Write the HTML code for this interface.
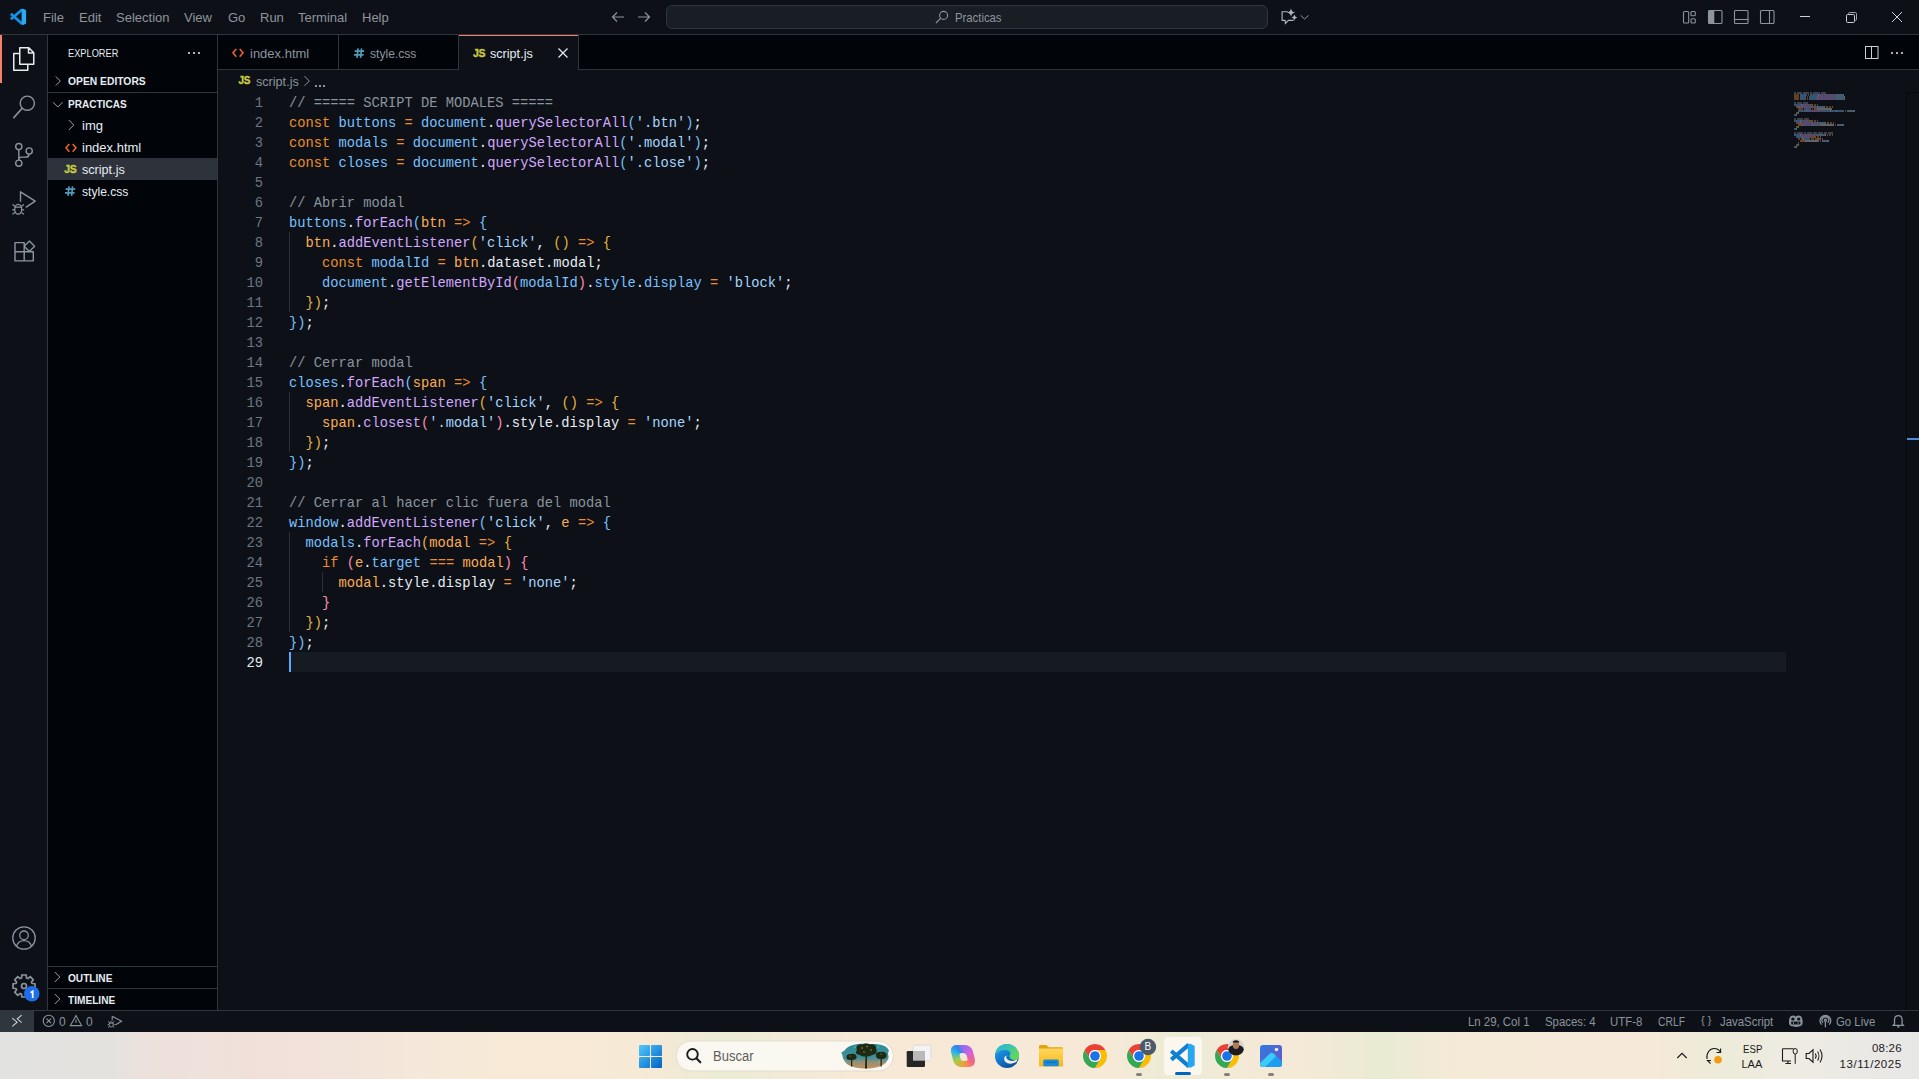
<!DOCTYPE html>
<html><head><meta charset="utf-8">
<style>
*{box-sizing:border-box;margin:0;padding:0}
html,body{width:1919px;height:1079px;overflow:hidden;background:#0d1117;font-family:"Liberation Sans",sans-serif}
.abs{position:absolute}
.t{position:absolute;white-space:pre;line-height:1}
.cl{position:absolute;left:289px;height:20px;line-height:20px;font-family:"Liberation Mono",monospace;font-size:13.75px;white-space:pre;color:#e6edf3}
.ln{position:absolute;left:224px;width:39px;text-align:right;height:20px;line-height:20px;font-family:"Liberation Mono",monospace;font-size:13.75px;white-space:pre}
svg{position:absolute;overflow:visible}
</style></head><body>

<!-- TITLE BAR -->
<div class="abs" style="left:0;top:0;width:1919px;height:34px;background:#0d1117"></div>
<div class="abs" style="left:0;top:34px;width:1919px;height:1px;background:#30363d"></div>
<!-- vscode logo -->
<svg style="left:0;top:0" width="34" height="34" viewBox="0 0 34 34">
  <path d="M10.8 19.3L22.3 9.4 M10.8 13.7L22.3 23.9" stroke="#1592e6" stroke-width="2.7"/>
  <path d="M21.6 9.2L23.3 8.8L26.1 10.3V23.4L23.3 24.9L21.6 24.5Z" fill="#2aa9f3"/>
</svg>
<div class="t" style="left:43px;top:11px;font-size:13px;color:#8d949c">File</div>
<div class="t" style="left:79px;top:11px;font-size:13px;color:#8d949c">Edit</div>
<div class="t" style="left:116px;top:11px;font-size:13px;color:#8d949c">Selection</div>
<div class="t" style="left:184px;top:11px;font-size:13px;color:#8d949c">View</div>
<div class="t" style="left:228px;top:11px;font-size:13px;color:#8d949c">Go</div>
<div class="t" style="left:260px;top:11px;font-size:13px;color:#8d949c">Run</div>
<div class="t" style="left:298px;top:11px;font-size:13px;color:#8d949c">Terminal</div>
<div class="t" style="left:362px;top:11px;font-size:13px;color:#8d949c">Help</div>

<!-- nav arrows -->
<svg style="left:610px;top:9px" width="16" height="16" viewBox="0 0 16 16"><path d="M14 8H2.5M7 3.5L2.5 8L7 12.5" fill="none" stroke="#8d949c" stroke-width="1.2"/></svg>
<svg style="left:636px;top:9px" width="16" height="16" viewBox="0 0 16 16"><path d="M2 8H13.5M9 3.5L13.5 8L9 12.5" fill="none" stroke="#8d949c" stroke-width="1.2"/></svg>
<!-- command center -->
<div class="abs" style="left:666px;top:5px;width:602px;height:24px;border:1px solid #30363d;border-radius:6px;background:#191d24"></div>
<svg style="left:935px;top:10px" width="14" height="14" viewBox="0 0 14 14"><circle cx="8.6" cy="5.4" r="4" fill="none" stroke="#8d949c" stroke-width="1.1"/><path d="M5.8 8.2L1 13" stroke="#8d949c" stroke-width="1.2"/></svg>
<div class="t" style="left:954.5px;top:11px;font-size:13px;color:#8d949c;transform-origin:0 0;transform:scaleX(0.87)">Practicas</div>
<!-- copilot -->
<svg style="left:0;top:0" width="1919" height="34" viewBox="0 0 1919 34">
 <path d="M1287.8 11.7H1282.1V20.3H1285.1L1285.4 23.4L1288.4 20.3H1293.6" fill="none" stroke="#aeb5bc" stroke-width="1.15"/>
 <path d="M1291 8.3Q1291.5 12 1295.2 12.5Q1291.5 13 1291 16.7Q1290.5 13 1286.8 12.5Q1290.5 12 1291 8.3Z" fill="#aeb5bc"/>
 <path d="M1294.4 14.6Q1294.8 17.1 1297.3 17.5Q1294.8 17.9 1294.4 20.4Q1294 17.9 1291.5 17.5Q1294 17.1 1294.4 14.6Z" fill="#aeb5bc"/>
 <path d="M1300.6 15.4L1304.6 19L1308.6 15.4" fill="none" stroke="#8d949c" stroke-width="1"/>
</svg>
<!-- layout icons -->
<svg style="left:1683px;top:10px" width="16" height="16" viewBox="0 0 16 16"><rect x="0.5" y="1.5" width="5.2" height="11.5" rx="1" fill="none" stroke="#8d949c" stroke-width="1.1"/><rect x="8" y="1.5" width="4.3" height="4.3" rx="1" fill="none" stroke="#8d949c" stroke-width="1.1"/><rect x="8" y="8.7" width="4.3" height="4.3" rx="1" fill="none" stroke="#8d949c" stroke-width="1.1"/></svg>
<svg style="left:1708px;top:10px" width="16" height="16" viewBox="0 0 16 16"><rect x="0.5" y="0.5" width="13.5" height="13" rx="1" fill="none" stroke="#8d949c" stroke-width="1.1"/><rect x="0.5" y="0.5" width="5.8" height="13" fill="#8d949c"/></svg>
<svg style="left:1734px;top:10px" width="16" height="16" viewBox="0 0 16 16"><rect x="0.5" y="0.5" width="13.5" height="13" rx="1" fill="none" stroke="#8d949c" stroke-width="1.1"/><path d="M0.5 9.5H14.5" stroke="#8d949c" stroke-width="1.1"/></svg>
<svg style="left:1760px;top:10px" width="16" height="16" viewBox="0 0 16 16"><rect x="0.5" y="0.5" width="13.5" height="13" rx="1" fill="none" stroke="#8d949c" stroke-width="1.1"/><path d="M9.5 0.5V14" stroke="#8d949c" stroke-width="1.1"/></svg>
<!-- window controls -->
<div class="abs" style="left:1800px;top:16px;width:10px;height:1px;background:#c9d1d9"></div>
<svg style="left:1846px;top:11.5px" width="12" height="12" viewBox="0 0 12 12"><rect x="0.5" y="2.5" width="8" height="8" rx="1.2" fill="none" stroke="#c9d1d9" stroke-width="1"/><path d="M2.5 2.5V1.8A1.3 1.3 0 0 1 3.8 0.5H9.2A1.3 1.3 0 0 1 10.5 1.8V7.2A1.3 1.3 0 0 1 9.2 8.5H8.5" fill="none" stroke="#9aa2ab" stroke-width="1"/></svg>
<svg style="left:1891px;top:11px" width="12" height="12" viewBox="0 0 12 12"><path d="M1 1L11 11M11 1L1 11" stroke="#c9d1d9" stroke-width="1"/></svg>

<!-- ACTIVITY BAR -->
<div class="abs" style="left:0;top:35px;width:47px;height:975px;background:#0d1117"></div>
<div class="abs" style="left:47px;top:35px;width:1px;height:975px;background:#30363d"></div>
<div class="abs" style="left:0;top:35px;width:2px;height:48px;background:#f78166"></div>


<!-- activity icons -->
<svg style="left:0;top:0" width="48" height="1010" viewBox="0 0 48 1010">
 <g fill="none" stroke-linejoin="round">
  <path d="M19.75 47.75H28.8L33.75 52.7V64.25H19.75Z M28.5 47.75V53H33.75 M19.75 53.5H13.75V70.25H27.75V64.25" stroke="#e6edf3" stroke-width="1.5"/>
  <circle cx="27.3" cy="103.2" r="7.1" stroke="#8b949e" stroke-width="1.4"/>
  <path d="M22.2 108.3L13.8 117.6" stroke="#8b949e" stroke-width="1.6" stroke-linecap="round"/>
  <circle cx="18.8" cy="146.6" r="3.1" stroke="#8b949e" stroke-width="1.4"/>
  <circle cx="18.8" cy="163.2" r="3.1" stroke="#8b949e" stroke-width="1.4"/>
  <circle cx="29.2" cy="151" r="3.1" stroke="#8b949e" stroke-width="1.4"/>
  <path d="M18.8 149.7V160.1 M18.8 159.5C18.8 157.9 19.9 157.1 21.5 157.1H25.6C27.6 157.1 29 156 29.1 154.1" stroke="#8b949e" stroke-width="1.4"/>
  <path d="M20.5 201.8V191.8L35.2 201.2L25.8 207.3" stroke="#8b949e" stroke-width="1.4"/>
  <ellipse cx="18.2" cy="209.3" rx="3.5" ry="4.9" stroke="#8b949e" stroke-width="1.3"/>
  <path d="M14.8 207.2H21.6 M12.5 204.5L15 206.3 M23.9 204.5L21.4 206.3 M12.2 209.9H14.6 M21.8 209.9H24.2 M12.5 214.2L15 212.5 M23.9 214.2L21.4 212.5" stroke="#8b949e" stroke-width="1.2"/>
  <path d="M15 242.6H24.2V260.9H15Z M15 251.75H33.3V260.9H24.2 M29.4 241.1L34.6 246.35L29.4 251.6L24.2 246.35Z" stroke="#8b949e" stroke-width="1.4"/>
  <circle cx="24" cy="938" r="11.2" stroke="#8b949e" stroke-width="1.3"/>
  <circle cx="24" cy="935.3" r="4.3" stroke="#8b949e" stroke-width="1.3"/>
  <path d="M16.4 946.2C17.6 942.6 20.5 940.6 24 940.6C27.5 940.6 30.4 942.6 31.6 946.2" stroke="#8b949e" stroke-width="1.3"/>
  <path id="gear" d="M32.02 983.52 L34.98 983.77 L34.98 988.23 L32.02 988.48 L31.43 989.92 L33.34 992.19 L30.19 995.34 L27.92 993.43 L26.48 994.02 L26.23 996.98 L21.77 996.98 L21.52 994.02 L20.08 993.43 L17.81 995.34 L14.66 992.19 L16.57 989.92 L15.98 988.48 L13.02 988.23 L13.02 983.77 L15.98 983.52 L16.57 982.08 L14.66 979.81 L17.81 976.66 L20.08 978.57 L21.52 977.98 L21.77 975.02 L26.23 975.02 L26.48 977.98 L27.92 978.57 L30.19 976.66 L33.34 979.81 L31.43 982.08Z" stroke="#8b949e" stroke-width="1.7"/>
  <circle cx="24" cy="986" r="2.5" stroke="#8b949e" stroke-width="1.7"/>
 </g>
 <circle cx="31.8" cy="993.7" r="7.7" fill="#1f6feb"/>
 <path d="M30.6 992.7L32.7 991.3V998.1" fill="none" stroke="#fff" stroke-width="1.7"/>
</svg>

<!-- SIDEBAR -->
<div class="abs" style="left:48px;top:35px;width:169px;height:975px;background:#010409"></div>
<div class="abs" style="left:217px;top:35px;width:1px;height:975px;background:#30363d"></div>


<!-- sidebar content -->
<div class="t" style="left:68px;top:47.5px;font-size:11px;color:#e6edf3;transform-origin:0 0;transform:scaleX(0.84)">EXPLORER</div>
<div class="abs" style="left:188px;top:52px;width:2px;height:2px;background:#aeb5bd"></div>
<div class="abs" style="left:193px;top:52px;width:2px;height:2px;background:#aeb5bd"></div>
<div class="abs" style="left:198px;top:52px;width:2px;height:2px;background:#aeb5bd"></div>
<svg style="left:54px;top:75px" width="10" height="12" viewBox="0 0 10 12"><path d="M1.8 1.5L6.3 6L1.8 10.5" fill="none" stroke="#9aa2ab" stroke-width="1"/></svg>
<div class="t" style="left:68px;top:76.3px;font-size:11px;font-weight:700;color:#e6edf3;transform-origin:0 0;transform:scaleX(0.937)">OPEN EDITORS</div>
<div class="abs" style="left:48px;top:92px;width:169px;height:1px;background:#30363d"></div>
<svg style="left:52px;top:100px" width="12" height="10" viewBox="0 0 12 10"><path d="M1 2.2L5.8 7L10.6 2.2" fill="none" stroke="#9aa2ab" stroke-width="1"/></svg>
<div class="t" style="left:68px;top:99.3px;font-size:11px;font-weight:700;color:#e6edf3;transform-origin:0 0;transform:scaleX(0.913)">PRACTICAS</div>
<svg style="left:67px;top:119px" width="10" height="12" viewBox="0 0 10 12"><path d="M1.8 1L6.8 6L1.8 11" fill="none" stroke="#9aa2ab" stroke-width="1"/></svg>
<div class="t" style="left:82px;top:119px;font-size:13px;color:#e6edf3">img</div>
<div class="abs" style="left:48px;top:158px;width:169px;height:22px;background:#2d323b"></div>
<div class="t" style="left:82px;top:141px;font-size:13px;color:#e6edf3">index.html</div>
<div class="t" style="left:82px;top:163px;font-size:13px;color:#e6edf3;transform-origin:0 0;transform:scaleX(0.97)">script.js</div>
<div class="t" style="left:82px;top:185px;font-size:13px;color:#e6edf3;transform-origin:0 0;transform:scaleX(0.93)">style.css</div>
<svg style="left:64.5px;top:142.5px" width="13" height="11" viewBox="0 0 13 11"><path d="M4.3 0.9L1 4.8L4.3 8.7M7.7 0.9L11 4.8L7.7 8.7" fill="none" stroke="#e8622c" stroke-width="1.6"/></svg>
<div class="t" style="left:64.3px;top:163.8px;font-size:10.5px;font-weight:700;color:#cbcb41;letter-spacing:-0.4px;-webkit-text-stroke:0.35px #cbcb41">JS</div>
<svg style="left:65px;top:186px" width="12" height="12" viewBox="0 0 12 12"><path d="M4 0.3L3 9.8M7.6 0.3L6.6 9.8M0.6 3.2H10.2M0 6.8H9.6" fill="none" stroke="#519aba" stroke-width="1.7"/></svg>
<svg style="left:53px;top:971px" width="10" height="12" viewBox="0 0 10 12"><path d="M1.8 1L6.8 6L1.8 11" fill="none" stroke="#9aa2ab" stroke-width="1"/></svg>
<div class="abs" style="left:48px;top:966px;width:169px;height:1px;background:#30363d"></div>
<div class="t" style="left:68px;top:973px;font-size:11px;font-weight:700;color:#e6edf3;transform-origin:0 0;transform:scaleX(0.92)">OUTLINE</div>
<div class="abs" style="left:48px;top:988px;width:169px;height:1px;background:#30363d"></div>
<svg style="left:53px;top:993px" width="10" height="12" viewBox="0 0 10 12"><path d="M1.8 1L6.8 6L1.8 11" fill="none" stroke="#9aa2ab" stroke-width="1"/></svg>
<div class="t" style="left:68px;top:995px;font-size:11px;font-weight:700;color:#e6edf3;transform-origin:0 0;transform:scaleX(0.92)">TIMELINE</div>

<!-- TABS -->
<div class="abs" style="left:218px;top:70px;width:1701px;height:940px;background:#0d1117"></div>

<div class="abs" style="left:218px;top:35px;width:1701px;height:35px;background:#010409"></div>
<div class="abs" style="left:218px;top:69px;width:1701px;height:1px;background:#30363d"></div>
<div class="abs" style="left:459px;top:35px;width:119px;height:35px;background:#0d1117"></div>
<div class="abs" style="left:459px;top:35px;width:119px;height:1px;background:#f78166"></div>
<div class="abs" style="left:338px;top:35px;width:1px;height:35px;background:#30363d"></div>
<div class="abs" style="left:458px;top:35px;width:1px;height:35px;background:#30363d"></div>
<div class="abs" style="left:578px;top:35px;width:1px;height:35px;background:#30363d"></div>


<!-- tab content -->
<svg style="left:232.2px;top:48px" width="13" height="11" viewBox="0 0 13 11"><path d="M4.3 0.9L1 4.8L4.3 8.7M7.7 0.9L11 4.8L7.7 8.7" fill="none" stroke="#e8622c" stroke-width="1.6"/></svg>
<div class="t" style="left:250px;top:47px;font-size:13px;color:#8b949e">index.html</div>
<svg style="left:354px;top:47.8px" width="12" height="12" viewBox="0 0 12 12"><path d="M4 0.3L3 9.8M7.6 0.3L6.6 9.8M0.6 3.2H10.2M0 6.8H9.6" fill="none" stroke="#519aba" stroke-width="1.7"/></svg>
<div class="t" style="left:370px;top:47px;font-size:13px;color:#8b949e;transform-origin:0 0;transform:scaleX(0.93)">style.css</div>
<div class="t" style="left:473px;top:47.5px;font-size:10.5px;font-weight:700;color:#cbcb41;letter-spacing:-0.4px;-webkit-text-stroke:0.35px #cbcb41">JS</div>
<div class="t" style="left:490px;top:47px;font-size:13px;color:#e6edf3;transform-origin:0 0;transform:scaleX(0.97)">script.js</div>
<svg style="left:557px;top:47px" width="12" height="12" viewBox="0 0 12 12"><path d="M1.5 1.5L10.5 10.5M10.5 1.5L1.5 10.5" stroke="#e6edf3" stroke-width="1.2"/></svg>
<svg style="left:1864px;top:45px" width="16" height="16" viewBox="0 0 16 16"><rect x="1.5" y="1.5" width="12.5" height="12" fill="none" stroke="#c9d1d9" stroke-width="1"/><path d="M7.5 1.5V13.5" stroke="#c9d1d9" stroke-width="1"/></svg>
<div class="abs" style="left:1891px;top:52px;width:2px;height:2px;background:#a7afb8"></div>
<div class="abs" style="left:1896px;top:52px;width:2px;height:2px;background:#a7afb8"></div>
<div class="abs" style="left:1901px;top:52px;width:2px;height:2px;background:#a7afb8"></div>
<!-- breadcrumb -->
<div class="t" style="left:238.5px;top:76.3px;font-size:10px;font-weight:700;color:#cbcb41;letter-spacing:-0.4px;-webkit-text-stroke:0.35px #cbcb41">JS</div>
<div class="t" style="left:256px;top:75px;font-size:13px;color:#8b949e;transform-origin:0 0;transform:scaleX(0.97)">script.js</div>
<svg style="left:302px;top:75px" width="10" height="12" viewBox="0 0 10 12"><path d="M2.5 1.2L7.3 6L2.5 10.8" fill="none" stroke="#8b949e" stroke-width="1"/></svg>
<div class="abs" style="left:315px;top:85px;width:1.5px;height:1.5px;background:#8b949e"></div>
<div class="abs" style="left:319px;top:85px;width:1.5px;height:1.5px;background:#8b949e"></div>
<div class="abs" style="left:323px;top:85px;width:1.5px;height:1.5px;background:#8b949e"></div>

<!-- EDITOR -->
<div class="abs" style="left:290px;top:652px;width:1496px;height:20px;background:#161b22"></div>
<div style="position:absolute;left:289px;top:232px;width:1px;height:80px;background:#2b3037"></div>
<div style="position:absolute;left:289px;top:392px;width:1px;height:60px;background:#2b3037"></div>
<div style="position:absolute;left:289px;top:532px;width:1px;height:100px;background:#2b3037"></div>
<div style="position:absolute;left:322px;top:572px;width:1px;height:20px;background:#2b3037"></div>
<div class="cl" style="top:94px"><span style="color:#8b949e">// ===== SCRIPT DE MODALES =====</span></div>
<div class="ln" style="top:94px;color:#6e7681">1</div>
<div class="cl" style="top:114px"><span style="color:#ec8e2c">const</span><span style="color:#e6edf3"> </span><span style="color:#79c0ff">buttons</span><span style="color:#e6edf3"> </span><span style="color:#ec8e2c">=</span><span style="color:#e6edf3"> </span><span style="color:#79c0ff">document</span><span style="color:#e6edf3">.</span><span style="color:#d2a8ff">querySelectorAll</span><span style="color:#79c0ff">(</span><span style="color:#a5d6ff">&#x27;.btn&#x27;</span><span style="color:#79c0ff">)</span><span style="color:#e6edf3">;</span></div>
<div class="ln" style="top:114px;color:#6e7681">2</div>
<div class="cl" style="top:134px"><span style="color:#ec8e2c">const</span><span style="color:#e6edf3"> </span><span style="color:#79c0ff">modals</span><span style="color:#e6edf3"> </span><span style="color:#ec8e2c">=</span><span style="color:#e6edf3"> </span><span style="color:#79c0ff">document</span><span style="color:#e6edf3">.</span><span style="color:#d2a8ff">querySelectorAll</span><span style="color:#79c0ff">(</span><span style="color:#a5d6ff">&#x27;.modal&#x27;</span><span style="color:#79c0ff">)</span><span style="color:#e6edf3">;</span></div>
<div class="ln" style="top:134px;color:#6e7681">3</div>
<div class="cl" style="top:154px"><span style="color:#ec8e2c">const</span><span style="color:#e6edf3"> </span><span style="color:#79c0ff">closes</span><span style="color:#e6edf3"> </span><span style="color:#ec8e2c">=</span><span style="color:#e6edf3"> </span><span style="color:#79c0ff">document</span><span style="color:#e6edf3">.</span><span style="color:#d2a8ff">querySelectorAll</span><span style="color:#79c0ff">(</span><span style="color:#a5d6ff">&#x27;.close&#x27;</span><span style="color:#79c0ff">)</span><span style="color:#e6edf3">;</span></div>
<div class="ln" style="top:154px;color:#6e7681">4</div>
<div class="cl" style="top:174px"></div>
<div class="ln" style="top:174px;color:#6e7681">5</div>
<div class="cl" style="top:194px"><span style="color:#8b949e">// Abrir modal</span></div>
<div class="ln" style="top:194px;color:#6e7681">6</div>
<div class="cl" style="top:214px"><span style="color:#79c0ff">buttons</span><span style="color:#e6edf3">.</span><span style="color:#d2a8ff">forEach</span><span style="color:#79c0ff">(</span><span style="color:#fdac54">btn</span><span style="color:#e6edf3"> </span><span style="color:#ec8e2c">=&gt;</span><span style="color:#e6edf3"> </span><span style="color:#79c0ff">{</span></div>
<div class="ln" style="top:214px;color:#6e7681">7</div>
<div class="cl" style="top:234px"><span style="color:#e6edf3">  </span><span style="color:#fdac54">btn</span><span style="color:#e6edf3">.</span><span style="color:#d2a8ff">addEventListener</span><span style="color:#e3b341">(</span><span style="color:#a5d6ff">&#x27;click&#x27;</span><span style="color:#e6edf3">, </span><span style="color:#e3b341">()</span><span style="color:#e6edf3"> </span><span style="color:#ec8e2c">=&gt;</span><span style="color:#e6edf3"> </span><span style="color:#e3b341">{</span></div>
<div class="ln" style="top:234px;color:#6e7681">8</div>
<div class="cl" style="top:254px"><span style="color:#e6edf3">    </span><span style="color:#ec8e2c">const</span><span style="color:#e6edf3"> </span><span style="color:#79c0ff">modalId</span><span style="color:#e6edf3"> </span><span style="color:#ec8e2c">=</span><span style="color:#e6edf3"> </span><span style="color:#fdac54">btn</span><span style="color:#e6edf3">.dataset.modal;</span></div>
<div class="ln" style="top:254px;color:#6e7681">9</div>
<div class="cl" style="top:274px"><span style="color:#e6edf3">    </span><span style="color:#79c0ff">document</span><span style="color:#e6edf3">.</span><span style="color:#d2a8ff">getElementById</span><span style="color:#ff8eb2">(</span><span style="color:#79c0ff">modalId</span><span style="color:#ff8eb2">)</span><span style="color:#e6edf3">.</span><span style="color:#79c0ff">style</span><span style="color:#e6edf3">.</span><span style="color:#79c0ff">display</span><span style="color:#e6edf3"> </span><span style="color:#ec8e2c">=</span><span style="color:#e6edf3"> </span><span style="color:#a5d6ff">&#x27;block&#x27;</span><span style="color:#e6edf3">;</span></div>
<div class="ln" style="top:274px;color:#6e7681">10</div>
<div class="cl" style="top:294px"><span style="color:#e6edf3">  </span><span style="color:#e3b341">})</span><span style="color:#e6edf3">;</span></div>
<div class="ln" style="top:294px;color:#6e7681">11</div>
<div class="cl" style="top:314px"><span style="color:#79c0ff">})</span><span style="color:#e6edf3">;</span></div>
<div class="ln" style="top:314px;color:#6e7681">12</div>
<div class="cl" style="top:334px"></div>
<div class="ln" style="top:334px;color:#6e7681">13</div>
<div class="cl" style="top:354px"><span style="color:#8b949e">// Cerrar modal</span></div>
<div class="ln" style="top:354px;color:#6e7681">14</div>
<div class="cl" style="top:374px"><span style="color:#79c0ff">closes</span><span style="color:#e6edf3">.</span><span style="color:#d2a8ff">forEach</span><span style="color:#79c0ff">(</span><span style="color:#fdac54">span</span><span style="color:#e6edf3"> </span><span style="color:#ec8e2c">=&gt;</span><span style="color:#e6edf3"> </span><span style="color:#79c0ff">{</span></div>
<div class="ln" style="top:374px;color:#6e7681">15</div>
<div class="cl" style="top:394px"><span style="color:#e6edf3">  </span><span style="color:#fdac54">span</span><span style="color:#e6edf3">.</span><span style="color:#d2a8ff">addEventListener</span><span style="color:#e3b341">(</span><span style="color:#a5d6ff">&#x27;click&#x27;</span><span style="color:#e6edf3">, </span><span style="color:#e3b341">()</span><span style="color:#e6edf3"> </span><span style="color:#ec8e2c">=&gt;</span><span style="color:#e6edf3"> </span><span style="color:#e3b341">{</span></div>
<div class="ln" style="top:394px;color:#6e7681">16</div>
<div class="cl" style="top:414px"><span style="color:#e6edf3">    </span><span style="color:#fdac54">span</span><span style="color:#e6edf3">.</span><span style="color:#d2a8ff">closest</span><span style="color:#ff8eb2">(</span><span style="color:#a5d6ff">&#x27;.modal&#x27;</span><span style="color:#ff8eb2">)</span><span style="color:#e6edf3">.style.display </span><span style="color:#ec8e2c">=</span><span style="color:#e6edf3"> </span><span style="color:#a5d6ff">&#x27;none&#x27;</span><span style="color:#e6edf3">;</span></div>
<div class="ln" style="top:414px;color:#6e7681">17</div>
<div class="cl" style="top:434px"><span style="color:#e6edf3">  </span><span style="color:#e3b341">})</span><span style="color:#e6edf3">;</span></div>
<div class="ln" style="top:434px;color:#6e7681">18</div>
<div class="cl" style="top:454px"><span style="color:#79c0ff">})</span><span style="color:#e6edf3">;</span></div>
<div class="ln" style="top:454px;color:#6e7681">19</div>
<div class="cl" style="top:474px"></div>
<div class="ln" style="top:474px;color:#6e7681">20</div>
<div class="cl" style="top:494px"><span style="color:#8b949e">// Cerrar al hacer clic fuera del modal</span></div>
<div class="ln" style="top:494px;color:#6e7681">21</div>
<div class="cl" style="top:514px"><span style="color:#79c0ff">window</span><span style="color:#e6edf3">.</span><span style="color:#d2a8ff">addEventListener</span><span style="color:#79c0ff">(</span><span style="color:#a5d6ff">&#x27;click&#x27;</span><span style="color:#e6edf3">, </span><span style="color:#fdac54">e</span><span style="color:#e6edf3"> </span><span style="color:#ec8e2c">=&gt;</span><span style="color:#e6edf3"> </span><span style="color:#79c0ff">{</span></div>
<div class="ln" style="top:514px;color:#6e7681">22</div>
<div class="cl" style="top:534px"><span style="color:#e6edf3">  </span><span style="color:#79c0ff">modals</span><span style="color:#e6edf3">.</span><span style="color:#d2a8ff">forEach</span><span style="color:#e3b341">(</span><span style="color:#fdac54">modal</span><span style="color:#e6edf3"> </span><span style="color:#ec8e2c">=&gt;</span><span style="color:#e6edf3"> </span><span style="color:#e3b341">{</span></div>
<div class="ln" style="top:534px;color:#6e7681">23</div>
<div class="cl" style="top:554px"><span style="color:#e6edf3">    </span><span style="color:#ec8e2c">if</span><span style="color:#e6edf3"> </span><span style="color:#ff8eb2">(</span><span style="color:#fdac54">e</span><span style="color:#e6edf3">.</span><span style="color:#79c0ff">target</span><span style="color:#e6edf3"> </span><span style="color:#ec8e2c">===</span><span style="color:#e6edf3"> </span><span style="color:#fdac54">modal</span><span style="color:#ff8eb2">)</span><span style="color:#e6edf3"> </span><span style="color:#ff8eb2">{</span></div>
<div class="ln" style="top:554px;color:#6e7681">24</div>
<div class="cl" style="top:574px"><span style="color:#e6edf3">      </span><span style="color:#fdac54">modal</span><span style="color:#e6edf3">.style.display </span><span style="color:#ec8e2c">=</span><span style="color:#e6edf3"> </span><span style="color:#a5d6ff">&#x27;none&#x27;</span><span style="color:#e6edf3">;</span></div>
<div class="ln" style="top:574px;color:#6e7681">25</div>
<div class="cl" style="top:594px"><span style="color:#e6edf3">    </span><span style="color:#ff8eb2">}</span></div>
<div class="ln" style="top:594px;color:#6e7681">26</div>
<div class="cl" style="top:614px"><span style="color:#e6edf3">  </span><span style="color:#e3b341">})</span><span style="color:#e6edf3">;</span></div>
<div class="ln" style="top:614px;color:#6e7681">27</div>
<div class="cl" style="top:634px"><span style="color:#79c0ff">})</span><span style="color:#e6edf3">;</span></div>
<div class="ln" style="top:634px;color:#6e7681">28</div>
<div class="cl" style="top:654px"></div>
<div class="ln" style="top:654px;color:#e6edf3">29</div>
<div class="abs" style="left:289px;top:652px;width:2px;height:20px;background:#5aa8ff"></div>
<div style="position:absolute;left:1794px;top:92px;width:2px;height:2px;background:#8b949e;opacity:.38"></div>
<div style="position:absolute;left:1797px;top:92px;width:5px;height:2px;background:#8b949e;opacity:.38"></div>
<div style="position:absolute;left:1803px;top:92px;width:6px;height:2px;background:#8b949e;opacity:.38"></div>
<div style="position:absolute;left:1810px;top:92px;width:2px;height:2px;background:#8b949e;opacity:.38"></div>
<div style="position:absolute;left:1813px;top:92px;width:7px;height:2px;background:#8b949e;opacity:.38"></div>
<div style="position:absolute;left:1821px;top:92px;width:5px;height:2px;background:#8b949e;opacity:.38"></div>
<div style="position:absolute;left:1794px;top:94px;width:5px;height:2px;background:#ec8e2c;opacity:.38"></div>
<div style="position:absolute;left:1800px;top:94px;width:7px;height:2px;background:#79c0ff;opacity:.38"></div>
<div style="position:absolute;left:1808px;top:94px;width:1px;height:2px;background:#ec8e2c;opacity:.38"></div>
<div style="position:absolute;left:1810px;top:94px;width:8px;height:2px;background:#79c0ff;opacity:.38"></div>
<div style="position:absolute;left:1818px;top:94px;width:1px;height:2px;background:#e6edf3;opacity:.38"></div>
<div style="position:absolute;left:1819px;top:94px;width:16px;height:2px;background:#d2a8ff;opacity:.38"></div>
<div style="position:absolute;left:1835px;top:94px;width:1px;height:2px;background:#79c0ff;opacity:.38"></div>
<div style="position:absolute;left:1836px;top:94px;width:6px;height:2px;background:#a5d6ff;opacity:.38"></div>
<div style="position:absolute;left:1842px;top:94px;width:1px;height:2px;background:#79c0ff;opacity:.38"></div>
<div style="position:absolute;left:1843px;top:94px;width:1px;height:2px;background:#e6edf3;opacity:.38"></div>
<div style="position:absolute;left:1794px;top:96px;width:5px;height:2px;background:#ec8e2c;opacity:.38"></div>
<div style="position:absolute;left:1800px;top:96px;width:6px;height:2px;background:#79c0ff;opacity:.38"></div>
<div style="position:absolute;left:1807px;top:96px;width:1px;height:2px;background:#ec8e2c;opacity:.38"></div>
<div style="position:absolute;left:1809px;top:96px;width:8px;height:2px;background:#79c0ff;opacity:.38"></div>
<div style="position:absolute;left:1817px;top:96px;width:1px;height:2px;background:#e6edf3;opacity:.38"></div>
<div style="position:absolute;left:1818px;top:96px;width:16px;height:2px;background:#d2a8ff;opacity:.38"></div>
<div style="position:absolute;left:1834px;top:96px;width:1px;height:2px;background:#79c0ff;opacity:.38"></div>
<div style="position:absolute;left:1835px;top:96px;width:8px;height:2px;background:#a5d6ff;opacity:.38"></div>
<div style="position:absolute;left:1843px;top:96px;width:1px;height:2px;background:#79c0ff;opacity:.38"></div>
<div style="position:absolute;left:1844px;top:96px;width:1px;height:2px;background:#e6edf3;opacity:.38"></div>
<div style="position:absolute;left:1794px;top:98px;width:5px;height:2px;background:#ec8e2c;opacity:.38"></div>
<div style="position:absolute;left:1800px;top:98px;width:6px;height:2px;background:#79c0ff;opacity:.38"></div>
<div style="position:absolute;left:1807px;top:98px;width:1px;height:2px;background:#ec8e2c;opacity:.38"></div>
<div style="position:absolute;left:1809px;top:98px;width:8px;height:2px;background:#79c0ff;opacity:.38"></div>
<div style="position:absolute;left:1817px;top:98px;width:1px;height:2px;background:#e6edf3;opacity:.38"></div>
<div style="position:absolute;left:1818px;top:98px;width:16px;height:2px;background:#d2a8ff;opacity:.38"></div>
<div style="position:absolute;left:1834px;top:98px;width:1px;height:2px;background:#79c0ff;opacity:.38"></div>
<div style="position:absolute;left:1835px;top:98px;width:8px;height:2px;background:#a5d6ff;opacity:.38"></div>
<div style="position:absolute;left:1843px;top:98px;width:1px;height:2px;background:#79c0ff;opacity:.38"></div>
<div style="position:absolute;left:1844px;top:98px;width:1px;height:2px;background:#e6edf3;opacity:.38"></div>
<div style="position:absolute;left:1794px;top:102px;width:2px;height:2px;background:#8b949e;opacity:.38"></div>
<div style="position:absolute;left:1797px;top:102px;width:5px;height:2px;background:#8b949e;opacity:.38"></div>
<div style="position:absolute;left:1803px;top:102px;width:5px;height:2px;background:#8b949e;opacity:.38"></div>
<div style="position:absolute;left:1794px;top:104px;width:7px;height:2px;background:#79c0ff;opacity:.38"></div>
<div style="position:absolute;left:1801px;top:104px;width:1px;height:2px;background:#e6edf3;opacity:.38"></div>
<div style="position:absolute;left:1802px;top:104px;width:7px;height:2px;background:#d2a8ff;opacity:.38"></div>
<div style="position:absolute;left:1809px;top:104px;width:1px;height:2px;background:#79c0ff;opacity:.38"></div>
<div style="position:absolute;left:1810px;top:104px;width:3px;height:2px;background:#fdac54;opacity:.38"></div>
<div style="position:absolute;left:1814px;top:104px;width:2px;height:2px;background:#ec8e2c;opacity:.38"></div>
<div style="position:absolute;left:1817px;top:104px;width:1px;height:2px;background:#79c0ff;opacity:.38"></div>
<div style="position:absolute;left:1796px;top:106px;width:3px;height:2px;background:#fdac54;opacity:.38"></div>
<div style="position:absolute;left:1799px;top:106px;width:1px;height:2px;background:#e6edf3;opacity:.38"></div>
<div style="position:absolute;left:1800px;top:106px;width:16px;height:2px;background:#d2a8ff;opacity:.38"></div>
<div style="position:absolute;left:1816px;top:106px;width:1px;height:2px;background:#e3b341;opacity:.38"></div>
<div style="position:absolute;left:1817px;top:106px;width:7px;height:2px;background:#a5d6ff;opacity:.38"></div>
<div style="position:absolute;left:1824px;top:106px;width:1px;height:2px;background:#e6edf3;opacity:.38"></div>
<div style="position:absolute;left:1826px;top:106px;width:2px;height:2px;background:#e3b341;opacity:.38"></div>
<div style="position:absolute;left:1829px;top:106px;width:2px;height:2px;background:#ec8e2c;opacity:.38"></div>
<div style="position:absolute;left:1832px;top:106px;width:1px;height:2px;background:#e3b341;opacity:.38"></div>
<div style="position:absolute;left:1798px;top:108px;width:5px;height:2px;background:#ec8e2c;opacity:.38"></div>
<div style="position:absolute;left:1804px;top:108px;width:7px;height:2px;background:#79c0ff;opacity:.38"></div>
<div style="position:absolute;left:1812px;top:108px;width:1px;height:2px;background:#ec8e2c;opacity:.38"></div>
<div style="position:absolute;left:1814px;top:108px;width:3px;height:2px;background:#fdac54;opacity:.38"></div>
<div style="position:absolute;left:1817px;top:108px;width:15px;height:2px;background:#e6edf3;opacity:.38"></div>
<div style="position:absolute;left:1798px;top:110px;width:8px;height:2px;background:#79c0ff;opacity:.38"></div>
<div style="position:absolute;left:1806px;top:110px;width:1px;height:2px;background:#e6edf3;opacity:.38"></div>
<div style="position:absolute;left:1807px;top:110px;width:14px;height:2px;background:#d2a8ff;opacity:.38"></div>
<div style="position:absolute;left:1821px;top:110px;width:1px;height:2px;background:#ff8eb2;opacity:.38"></div>
<div style="position:absolute;left:1822px;top:110px;width:7px;height:2px;background:#79c0ff;opacity:.38"></div>
<div style="position:absolute;left:1829px;top:110px;width:1px;height:2px;background:#ff8eb2;opacity:.38"></div>
<div style="position:absolute;left:1830px;top:110px;width:1px;height:2px;background:#e6edf3;opacity:.38"></div>
<div style="position:absolute;left:1831px;top:110px;width:5px;height:2px;background:#79c0ff;opacity:.38"></div>
<div style="position:absolute;left:1836px;top:110px;width:1px;height:2px;background:#e6edf3;opacity:.38"></div>
<div style="position:absolute;left:1837px;top:110px;width:7px;height:2px;background:#79c0ff;opacity:.38"></div>
<div style="position:absolute;left:1845px;top:110px;width:1px;height:2px;background:#ec8e2c;opacity:.38"></div>
<div style="position:absolute;left:1847px;top:110px;width:7px;height:2px;background:#a5d6ff;opacity:.38"></div>
<div style="position:absolute;left:1854px;top:110px;width:1px;height:2px;background:#e6edf3;opacity:.38"></div>
<div style="position:absolute;left:1796px;top:112px;width:2px;height:2px;background:#e3b341;opacity:.38"></div>
<div style="position:absolute;left:1798px;top:112px;width:1px;height:2px;background:#e6edf3;opacity:.38"></div>
<div style="position:absolute;left:1794px;top:114px;width:2px;height:2px;background:#79c0ff;opacity:.38"></div>
<div style="position:absolute;left:1796px;top:114px;width:1px;height:2px;background:#e6edf3;opacity:.38"></div>
<div style="position:absolute;left:1794px;top:118px;width:2px;height:2px;background:#8b949e;opacity:.38"></div>
<div style="position:absolute;left:1797px;top:118px;width:6px;height:2px;background:#8b949e;opacity:.38"></div>
<div style="position:absolute;left:1804px;top:118px;width:5px;height:2px;background:#8b949e;opacity:.38"></div>
<div style="position:absolute;left:1794px;top:120px;width:6px;height:2px;background:#79c0ff;opacity:.38"></div>
<div style="position:absolute;left:1800px;top:120px;width:1px;height:2px;background:#e6edf3;opacity:.38"></div>
<div style="position:absolute;left:1801px;top:120px;width:7px;height:2px;background:#d2a8ff;opacity:.38"></div>
<div style="position:absolute;left:1808px;top:120px;width:1px;height:2px;background:#79c0ff;opacity:.38"></div>
<div style="position:absolute;left:1809px;top:120px;width:4px;height:2px;background:#fdac54;opacity:.38"></div>
<div style="position:absolute;left:1814px;top:120px;width:2px;height:2px;background:#ec8e2c;opacity:.38"></div>
<div style="position:absolute;left:1817px;top:120px;width:1px;height:2px;background:#79c0ff;opacity:.38"></div>
<div style="position:absolute;left:1796px;top:122px;width:4px;height:2px;background:#fdac54;opacity:.38"></div>
<div style="position:absolute;left:1800px;top:122px;width:1px;height:2px;background:#e6edf3;opacity:.38"></div>
<div style="position:absolute;left:1801px;top:122px;width:16px;height:2px;background:#d2a8ff;opacity:.38"></div>
<div style="position:absolute;left:1817px;top:122px;width:1px;height:2px;background:#e3b341;opacity:.38"></div>
<div style="position:absolute;left:1818px;top:122px;width:7px;height:2px;background:#a5d6ff;opacity:.38"></div>
<div style="position:absolute;left:1825px;top:122px;width:1px;height:2px;background:#e6edf3;opacity:.38"></div>
<div style="position:absolute;left:1827px;top:122px;width:2px;height:2px;background:#e3b341;opacity:.38"></div>
<div style="position:absolute;left:1830px;top:122px;width:2px;height:2px;background:#ec8e2c;opacity:.38"></div>
<div style="position:absolute;left:1833px;top:122px;width:1px;height:2px;background:#e3b341;opacity:.38"></div>
<div style="position:absolute;left:1798px;top:124px;width:4px;height:2px;background:#fdac54;opacity:.38"></div>
<div style="position:absolute;left:1802px;top:124px;width:1px;height:2px;background:#e6edf3;opacity:.38"></div>
<div style="position:absolute;left:1803px;top:124px;width:7px;height:2px;background:#d2a8ff;opacity:.38"></div>
<div style="position:absolute;left:1810px;top:124px;width:1px;height:2px;background:#ff8eb2;opacity:.38"></div>
<div style="position:absolute;left:1811px;top:124px;width:8px;height:2px;background:#a5d6ff;opacity:.38"></div>
<div style="position:absolute;left:1819px;top:124px;width:1px;height:2px;background:#ff8eb2;opacity:.38"></div>
<div style="position:absolute;left:1820px;top:124px;width:14px;height:2px;background:#e6edf3;opacity:.38"></div>
<div style="position:absolute;left:1835px;top:124px;width:1px;height:2px;background:#ec8e2c;opacity:.38"></div>
<div style="position:absolute;left:1837px;top:124px;width:6px;height:2px;background:#a5d6ff;opacity:.38"></div>
<div style="position:absolute;left:1843px;top:124px;width:1px;height:2px;background:#e6edf3;opacity:.38"></div>
<div style="position:absolute;left:1796px;top:126px;width:2px;height:2px;background:#e3b341;opacity:.38"></div>
<div style="position:absolute;left:1798px;top:126px;width:1px;height:2px;background:#e6edf3;opacity:.38"></div>
<div style="position:absolute;left:1794px;top:128px;width:2px;height:2px;background:#79c0ff;opacity:.38"></div>
<div style="position:absolute;left:1796px;top:128px;width:1px;height:2px;background:#e6edf3;opacity:.38"></div>
<div style="position:absolute;left:1794px;top:132px;width:2px;height:2px;background:#8b949e;opacity:.38"></div>
<div style="position:absolute;left:1797px;top:132px;width:6px;height:2px;background:#8b949e;opacity:.38"></div>
<div style="position:absolute;left:1804px;top:132px;width:2px;height:2px;background:#8b949e;opacity:.38"></div>
<div style="position:absolute;left:1807px;top:132px;width:5px;height:2px;background:#8b949e;opacity:.38"></div>
<div style="position:absolute;left:1813px;top:132px;width:4px;height:2px;background:#8b949e;opacity:.38"></div>
<div style="position:absolute;left:1818px;top:132px;width:5px;height:2px;background:#8b949e;opacity:.38"></div>
<div style="position:absolute;left:1824px;top:132px;width:3px;height:2px;background:#8b949e;opacity:.38"></div>
<div style="position:absolute;left:1828px;top:132px;width:5px;height:2px;background:#8b949e;opacity:.38"></div>
<div style="position:absolute;left:1794px;top:134px;width:6px;height:2px;background:#79c0ff;opacity:.38"></div>
<div style="position:absolute;left:1800px;top:134px;width:1px;height:2px;background:#e6edf3;opacity:.38"></div>
<div style="position:absolute;left:1801px;top:134px;width:16px;height:2px;background:#d2a8ff;opacity:.38"></div>
<div style="position:absolute;left:1817px;top:134px;width:1px;height:2px;background:#79c0ff;opacity:.38"></div>
<div style="position:absolute;left:1818px;top:134px;width:7px;height:2px;background:#a5d6ff;opacity:.38"></div>
<div style="position:absolute;left:1825px;top:134px;width:1px;height:2px;background:#e6edf3;opacity:.38"></div>
<div style="position:absolute;left:1827px;top:134px;width:1px;height:2px;background:#fdac54;opacity:.38"></div>
<div style="position:absolute;left:1829px;top:134px;width:2px;height:2px;background:#ec8e2c;opacity:.38"></div>
<div style="position:absolute;left:1832px;top:134px;width:1px;height:2px;background:#79c0ff;opacity:.38"></div>
<div style="position:absolute;left:1796px;top:136px;width:6px;height:2px;background:#79c0ff;opacity:.38"></div>
<div style="position:absolute;left:1802px;top:136px;width:1px;height:2px;background:#e6edf3;opacity:.38"></div>
<div style="position:absolute;left:1803px;top:136px;width:7px;height:2px;background:#d2a8ff;opacity:.38"></div>
<div style="position:absolute;left:1810px;top:136px;width:1px;height:2px;background:#e3b341;opacity:.38"></div>
<div style="position:absolute;left:1811px;top:136px;width:5px;height:2px;background:#fdac54;opacity:.38"></div>
<div style="position:absolute;left:1817px;top:136px;width:2px;height:2px;background:#ec8e2c;opacity:.38"></div>
<div style="position:absolute;left:1820px;top:136px;width:1px;height:2px;background:#e3b341;opacity:.38"></div>
<div style="position:absolute;left:1798px;top:138px;width:2px;height:2px;background:#ec8e2c;opacity:.38"></div>
<div style="position:absolute;left:1801px;top:138px;width:1px;height:2px;background:#ff8eb2;opacity:.38"></div>
<div style="position:absolute;left:1802px;top:138px;width:1px;height:2px;background:#fdac54;opacity:.38"></div>
<div style="position:absolute;left:1803px;top:138px;width:1px;height:2px;background:#e6edf3;opacity:.38"></div>
<div style="position:absolute;left:1804px;top:138px;width:6px;height:2px;background:#79c0ff;opacity:.38"></div>
<div style="position:absolute;left:1811px;top:138px;width:3px;height:2px;background:#ec8e2c;opacity:.38"></div>
<div style="position:absolute;left:1815px;top:138px;width:5px;height:2px;background:#fdac54;opacity:.38"></div>
<div style="position:absolute;left:1820px;top:138px;width:1px;height:2px;background:#ff8eb2;opacity:.38"></div>
<div style="position:absolute;left:1822px;top:138px;width:1px;height:2px;background:#ff8eb2;opacity:.38"></div>
<div style="position:absolute;left:1800px;top:140px;width:5px;height:2px;background:#fdac54;opacity:.38"></div>
<div style="position:absolute;left:1805px;top:140px;width:14px;height:2px;background:#e6edf3;opacity:.38"></div>
<div style="position:absolute;left:1820px;top:140px;width:1px;height:2px;background:#ec8e2c;opacity:.38"></div>
<div style="position:absolute;left:1822px;top:140px;width:6px;height:2px;background:#a5d6ff;opacity:.38"></div>
<div style="position:absolute;left:1828px;top:140px;width:1px;height:2px;background:#e6edf3;opacity:.38"></div>
<div style="position:absolute;left:1798px;top:142px;width:1px;height:2px;background:#ff8eb2;opacity:.38"></div>
<div style="position:absolute;left:1796px;top:144px;width:2px;height:2px;background:#e3b341;opacity:.38"></div>
<div style="position:absolute;left:1798px;top:144px;width:1px;height:2px;background:#e6edf3;opacity:.38"></div>
<div style="position:absolute;left:1794px;top:146px;width:2px;height:2px;background:#79c0ff;opacity:.38"></div>
<div style="position:absolute;left:1796px;top:146px;width:1px;height:2px;background:#e6edf3;opacity:.38"></div>
<div class="abs" style="left:1906px;top:92px;width:1px;height:918px;background:#05080d"></div><div class="abs" style="left:1906px;top:92px;width:13px;height:1px;background:#05080d"></div>
<div class="abs" style="left:1907px;top:438px;width:12px;height:2px;background:#4a8cd6"></div>

<!-- STATUS BAR -->
<div class="abs" style="left:0;top:1010px;width:1919px;height:1px;background:#30363d"></div>
<div class="abs" style="left:0;top:1011px;width:1919px;height:21px;background:#0d1117"></div>
<div class="abs" style="left:0;top:1011px;width:34px;height:21px;background:#30363d"></div>


<!-- status content -->
<svg style="left:0;top:1010px" width="130" height="22" viewBox="0 1010 130 22">
 <g fill="none" stroke="#c9d1d9" stroke-width="1.1">
  <path d="M12.3 1018.2L17.1 1022.2L12.3 1026.3 M21.7 1015.1L17.3 1018.8L21.7 1022.6"/>
 </g>
 <g fill="none" stroke="#8b949e" stroke-width="1.1">
  <circle cx="48.8" cy="1020.9" r="5.6"/>
  <path d="M46.5 1018.6L51.1 1023.2M51.1 1018.6L46.5 1023.2"/>
  <path d="M76 1015.6L81.6 1025.6H70.4Z M76 1019.5V1023"/>
  <path d="M112.2 1016.2L121.6 1021.2L115.2 1025 M112.2 1016.2V1020.2"/>
  <ellipse cx="111.2" cy="1024.4" rx="2.1" ry="2.7" stroke-width="1"/>
  <path d="M109.1 1023.2H113.3 M108 1021.4L109.3 1022.2 M114.4 1021.4L113.1 1022.2 M107.7 1024.5H109 M113.4 1024.5H114.7 M108 1027.4L109.3 1026.6 M114.4 1027.4L113.1 1026.6" stroke-width="0.9"/>
 </g>
</svg>
<div class="t" style="left:59px;top:1016px;font-size:12px;color:#8b949e">0</div>
<div class="t" style="left:86px;top:1016px;font-size:12px;color:#8b949e">0</div>
<div class="t" style="left:1468px;top:1016px;font-size:12px;color:#8b949e;transform-origin:0 0;transform:scaleX(0.95)">Ln 29, Col 1</div>
<div class="t" style="left:1545px;top:1016px;font-size:12px;color:#8b949e;transform-origin:0 0;transform:scaleX(0.95)">Spaces: 4</div>
<div class="t" style="left:1610px;top:1016px;font-size:12px;color:#8b949e;transform-origin:0 0;transform:scaleX(0.95)">UTF-8</div>
<div class="t" style="left:1658px;top:1016px;font-size:12px;color:#8b949e;transform-origin:0 0;transform:scaleX(0.86)">CRLF</div>
<div class="t" style="left:1701px;top:1015px;font-size:11px;color:#8b949e">{ }</div>
<div class="t" style="left:1720px;top:1016px;font-size:12px;color:#8b949e;transform-origin:0 0;transform:scaleX(0.95)">JavaScript</div>
<svg style="left:1780px;top:1010px" width="140" height="22" viewBox="1780 1010 140 22">
 <g fill="none" stroke="#8b949e" stroke-width="1.3">
  <path d="M1789 1021.5C1789 1017.2 1790.8 1015.5 1793.3 1015.5C1794.9 1015.5 1795.8 1016.3 1795.8 1017.6C1795.8 1016.3 1796.7 1015.5 1798.3 1015.5C1800.8 1015.5 1802.6 1017.2 1802.6 1021.5V1023C1802.6 1025.6 1799.5 1026.9 1795.8 1026.9C1792.1 1026.9 1789 1025.6 1789 1023Z" fill="#8b949e" stroke="none"/>
  <ellipse cx="1792.9" cy="1018.9" rx="1.7" ry="1.5" fill="#0d1117" stroke="none"/>
  <ellipse cx="1798.7" cy="1018.9" rx="1.7" ry="1.5" fill="#0d1117" stroke="none"/>
  <path d="M1791.2 1021.6H1800.4V1024.4H1791.2Z" fill="#0d1117" stroke="none"/>
  <path d="M1793.5 1022.2V1023.8M1798.1 1022.2V1023.8" stroke="#8b949e" stroke-width="1.1"/>
  <circle cx="1825.4" cy="1020.3" r="1.1"/>
  <path d="M1823 1022.8A3.5 3.5 0 1 1 1827.8 1022.8 M1821.6 1024.6A5.4 5.4 0 1 1 1829.2 1024.6 M1825.4 1021.8V1027.3"/>
  <path d="M1894.5 1024V1020C1894.5 1017.3 1896 1015.6 1898.3 1015.6C1900.6 1015.6 1902.1 1017.3 1902.1 1020V1024L1903.3 1025.3H1893.3Z M1897 1026.8H1899.6"/>
 </g>
</svg>
<div class="t" style="left:1836px;top:1016px;font-size:12px;color:#8b949e;transform-origin:0 0;transform:scaleX(0.95)">Go Live</div>

<!-- TASKBAR -->
<div class="abs" style="left:0;top:1032px;width:1919px;height:47px;background:linear-gradient(90deg,#e2e2e0 0.00%,#e3e2df 5.73%,#ece1dc 7.30%,#f1e0da 13.03%,#f2e3db 17.72%,#f6e8d9 22.41%,#f8ead6 27.10%,#f6e9d6 33.35%,#ecebd4 37.52%,#f0ead6 40.65%,#f7e9d6 44.82%,#f7e9d7 57.32%,#ebecd5 61.49%,#f4e9d7 65.14%,#f5e9d7 67.74%,#e9ebd3 71.91%,#f5e9d8 76.08%,#f6e9d9 85.98%,#edebd9 89.63%,#eeebe3 93.80%,#e9e8e5 97.97%,#e7e7e6 100.00%)"></div>


<!-- taskbar content -->
<svg style="left:0;top:1032px" width="1919" height="47" viewBox="0 1032 1919 47">
 <defs>
  <linearGradient id="win" gradientUnits="userSpaceOnUse" x1="639" y1="1045" x2="662" y2="1068"><stop offset="0" stop-color="#52c8fd"/><stop offset="1" stop-color="#0062c4"/></linearGradient>
  <linearGradient id="blob" x1="0" y1="0" x2="0" y2="1"><stop offset="0" stop-color="#2a8c95"/><stop offset="0.55" stop-color="#3f8f9a"/><stop offset="1" stop-color="#c99a6a"/></linearGradient>
  <linearGradient id="edge" x1="0" y1="0" x2="0.6" y2="1"><stop offset="0" stop-color="#2aa6ec"/><stop offset="0.6" stop-color="#1178cf"/><stop offset="1" stop-color="#0b4f9a"/></linearGradient>
  <linearGradient id="edge2" x1="0" y1="0" x2="1" y2="0.5"><stop offset="0" stop-color="#2cb2e4"/><stop offset="0.6" stop-color="#3cc6a8"/><stop offset="1" stop-color="#62d85a"/></linearGradient>
  <linearGradient id="fold" x1="0" y1="0" x2="0" y2="1"><stop offset="0" stop-color="#ffd75e"/><stop offset="1" stop-color="#f7b818"/></linearGradient>
  <linearGradient id="photo" x1="0" y1="0" x2="1" y2="1"><stop offset="0" stop-color="#2b7de0"/><stop offset="1" stop-color="#7452c4"/></linearGradient>
  <linearGradient id="cop" x1="0" y1="0" x2="1" y2="1"><stop offset="0" stop-color="#27a3f2"/><stop offset="0.35" stop-color="#4fcf7a"/><stop offset="0.55" stop-color="#f9b23a"/><stop offset="0.8" stop-color="#f25b8f"/><stop offset="1" stop-color="#b86cf2"/></linearGradient>
  <linearGradient id="vsc" x1="0" y1="0" x2="1" y2="0"><stop offset="0" stop-color="#0a78d1"/><stop offset="1" stop-color="#2aaaf0"/></linearGradient>
 </defs>
 <!-- windows -->
 <rect x="639" y="1045" width="11" height="11" rx="1" fill="url(#win)"/>
 <rect x="651" y="1045" width="11" height="11" rx="1" fill="url(#win)"/>
 <rect x="639" y="1057" width="11" height="11" rx="1" fill="url(#win)"/>
 <rect x="651" y="1057" width="11" height="11" rx="1" fill="url(#win)"/>
 <!-- search box -->
 <rect x="676" y="1041" width="217.5" height="30" rx="15" fill="#fbf8f1" stroke="#e2dccd" stroke-width="1"/>
 <circle cx="692.5" cy="1054.3" r="5.3" fill="none" stroke="#1c1c1c" stroke-width="1.9"/>
 <path d="M696.4 1058.3L700.3 1062.3" stroke="#1c1c1c" stroke-width="2.1" stroke-linecap="round"/>
 <path d="M845 1050C848 1044.5 860 1043 870 1044C880 1043.5 888 1046 889 1051C887 1053 889 1056 888.5 1058C887 1063 880 1068.5 866 1068.5C852 1068.5 845 1064 844 1060C842 1057 843 1054 841 1053C842 1052 844 1051 845 1050Z" fill="url(#blob)"/>
 <path d="M846 1063C852 1061 860 1060.5 866 1060.5C874 1060.5 882 1061 887 1062C884 1066 876 1068.5 866 1068.5C856 1068.5 849 1066 846 1063Z" fill="#b88a58" opacity="0.45"/>
 <g fill="#1f2a12">
  <path d="M857 1050C855 1046 859 1043.5 862 1044.5C864 1043 868 1043 870 1044.5C873 1043.5 877 1045.5 876 1049C878 1051 876 1055 872 1055C869 1057 862 1057 860 1055C856 1055 855 1052 857 1050Z"/>
  <path d="M865.5 1055H867V1068.5H865Z"/>
  <path d="M846.5 1057C846 1054.5 849 1053.5 851 1054C853.5 1053 857 1054.5 856.5 1057C857 1059 854 1060.5 851 1060C848 1060.5 846 1059 846.5 1057Z"/>
  <path d="M851 1059.5H852.3V1066.5H851Z"/>
  <path d="M876 1055C875.5 1052.5 878 1051.5 880.5 1052C883 1051 887 1052.5 886.5 1055C887 1058 884 1059.5 881 1059C878 1059.5 875.5 1057.5 876 1055Z"/>
  <path d="M880.5 1058.5H881.8V1066.5H880.5Z"/>
 </g>
 <g fill="#b9b84a" opacity="0.8"><circle cx="862" cy="1048" r="0.8"/><circle cx="867" cy="1046.5" r="0.8"/><circle cx="871" cy="1050" r="0.8"/><circle cx="864" cy="1052" r="0.7"/><circle cx="850" cy="1056" r="0.6"/><circle cx="881" cy="1054" r="0.6"/></g>
 <g fill="#dfeff0" opacity="0.8"><circle cx="855" cy="1047" r="0.6"/><circle cx="878" cy="1047" r="0.6"/><circle cx="846" cy="1062" r="0.5"/><circle cx="879" cy="1062" r="0.5"/></g>
 <!-- task view -->
 <rect x="913" y="1045.2" width="17.8" height="15.5" rx="1.2" fill="#f4f4f4" stroke="#d8d8d8" stroke-width="0.8"/>
 <rect x="906.7" y="1051" width="18.3" height="16" rx="1.2" fill="#262626"/>
 <rect x="913" y="1051" width="12" height="9.7" fill="#b9b9b9"/>
 <!-- copilot -->
 <!-- edge -->
 <circle cx="1007" cy="1056" r="12" fill="url(#edge)"/>
 <path d="M995.2 1054.5C996 1047.5 1001 1044 1007 1044C1014 1044 1019 1049.5 1019 1055.5C1019 1058.5 1017.5 1060 1015 1060C1012 1060 1009.5 1058.5 1009.5 1056.5C1009.5 1054.5 1011 1053.5 1010 1052C1008 1049 1000 1049 995.2 1054.5Z" fill="url(#edge2)"/>
 <path d="M1017.6 1058.8C1015.5 1061.2 1011.2 1061.6 1008.3 1060C1006.2 1058.9 1005.6 1056.8 1006.8 1055.4C1004.4 1055.8 1003.5 1058.6 1004.8 1061C1006.8 1064.2 1012.4 1064.6 1016.6 1061.6Z" fill="#f2efe0"/>
 <!-- folder -->
 <path d="M1039 1046.5C1039 1045.7 1039.7 1045 1040.5 1045H1046.5L1048.5 1047.3H1061.5C1062.4 1047.3 1063 1048 1063 1048.8V1066.2H1039Z" fill="#e3a20c"/>
 <rect x="1039" y="1048.5" width="24" height="17.7" rx="0.8" fill="url(#fold)"/>
 <rect x="1043.2" y="1059.5" width="15.6" height="6.7" rx="1.5" fill="#1a8ad6"/>
 <path d="M1045.5 1062.3H1056.5" stroke="#0f62a8" stroke-width="0.8"/>
 <!-- chrome icons -->
 <path d="M1084.61 1050.00 A12.00 12.00 0 0 1 1105.39 1050.00 L1095.00 1050.00 A6.00 6.00 0 0 0 1089.80 1059.00 Z" fill="#e94235"/><path d="M1105.39 1050.00 A12.00 12.00 0 0 1 1095.00 1068.00 L1100.20 1059.00 A6.00 6.00 0 0 0 1095.00 1050.00 Z" fill="#fbbc04"/><path d="M1095.00 1068.00 A12.00 12.00 0 0 1 1084.61 1050.00 L1089.80 1059.00 A6.00 6.00 0 0 0 1100.20 1059.00 Z" fill="#34a853"/><circle cx="1095.00" cy="1056.00" r="6.00" fill="#ffffff"/><circle cx="1095.00" cy="1056.00" r="4.80" fill="#1a73e8"/><path d="M1128.61 1050.00 A12.00 12.00 0 0 1 1149.39 1050.00 L1139.00 1050.00 A6.00 6.00 0 0 0 1133.80 1059.00 Z" fill="#e94235"/><path d="M1149.39 1050.00 A12.00 12.00 0 0 1 1139.00 1068.00 L1144.20 1059.00 A6.00 6.00 0 0 0 1139.00 1050.00 Z" fill="#fbbc04"/><path d="M1139.00 1068.00 A12.00 12.00 0 0 1 1128.61 1050.00 L1133.80 1059.00 A6.00 6.00 0 0 0 1144.20 1059.00 Z" fill="#34a853"/><circle cx="1139.00" cy="1056.00" r="6.00" fill="#ffffff"/><circle cx="1139.00" cy="1056.00" r="4.80" fill="#1a73e8"/><path d="M1216.61 1050.00 A12.00 12.00 0 0 1 1237.39 1050.00 L1227.00 1050.00 A6.00 6.00 0 0 0 1221.80 1059.00 Z" fill="#e94235"/><path d="M1237.39 1050.00 A12.00 12.00 0 0 1 1227.00 1068.00 L1232.20 1059.00 A6.00 6.00 0 0 0 1227.00 1050.00 Z" fill="#fbbc04"/><path d="M1227.00 1068.00 A12.00 12.00 0 0 1 1216.61 1050.00 L1221.80 1059.00 A6.00 6.00 0 0 0 1232.20 1059.00 Z" fill="#34a853"/><circle cx="1227.00" cy="1056.00" r="6.00" fill="#ffffff"/><circle cx="1227.00" cy="1056.00" r="4.80" fill="#1a73e8"/>
 <!-- B badge -->
 <circle cx="1148" cy="1047" r="8.2" fill="#4a5a68"/>
 <!-- vscode tile -->
 <rect x="1164" y="1037" width="38" height="38" rx="4" fill="#fbf6ee"/>
 <path d="M1171.3 1059.6L1188.9 1044.6 M1171.3 1051L1188.9 1066.4" stroke="#0f7fd4" stroke-width="4.1"/>
 <path d="M1187.8 1044.3L1190.4 1043.7L1194.7 1045.95V1065.6L1190.4 1067.85L1187.8 1067.25Z" fill="#27a7f0"/>
 <rect x="1175" y="1072" width="16" height="3" rx="1.5" fill="#0067c0"/>
 <!-- avatar -->
 <circle cx="1236" cy="1047.2" r="8.2" fill="#d8d4cc"/>
 <path d="M1228.2 1049.5C1229 1046 1232 1045 1236 1045C1240 1045 1243 1046 1243.8 1049.5C1243 1053 1240 1055.4 1236 1055.4C1232 1055.4 1229 1053 1228.2 1049.5Z" fill="#1d1d1f"/>
 <ellipse cx="1236" cy="1045" rx="3.2" ry="4" fill="#b07a5c"/>
 <path d="M1232.6 1042.5C1233 1039.5 1239 1039.5 1239.4 1042.5Z" fill="#1a1a1a"/>
 <!-- photos -->
 <rect x="1260" y="1045" width="22" height="22" rx="3" fill="url(#photo)"/>
 <path d="M1260 1063L1270 1053.5C1271 1052.5 1272.5 1052.5 1273.5 1053.5L1282 1061.5V1064C1282 1065.7 1280.7 1067 1279 1067H1263C1261.3 1067 1260 1065.7 1260 1064Z" fill="#1b9ef0"/>
 <path d="M1260 1063L1270 1053.5C1271 1052.5 1272.5 1052.5 1273.5 1053.5L1276 1056L1265 1067H1263C1261.3 1067 1260 1065.7 1260 1064Z" fill="#3ccaf7"/>
 <circle cx="1276.5" cy="1049.5" r="1.8" fill="#e8eefc"/>
 <!-- running indicators -->
 <rect x="1136" y="1073" width="6" height="3" rx="1.5" fill="#85817a"/>
 <rect x="1224" y="1073" width="6" height="3" rx="1.5" fill="#85817a"/>
 <rect x="1268" y="1073" width="6" height="3" rx="1.5" fill="#85817a"/>
 <!-- tray -->
 <path d="M1677.3 1058L1682 1053.3L1686.7 1058" fill="none" stroke="#1a1a1a" stroke-width="1.1"/>
 <path d="M1707 1059C1706 1053 1710 1048.5 1714 1048.5C1717 1048.5 1719.5 1050 1720.5 1052.5 M1716.5 1052.5H1720.6V1048.6 M1710.5 1063.5L1707.5 1060.5H1711" fill="none" stroke="#1a1a1a" stroke-width="1.1"/>
 <circle cx="1718" cy="1059.7" r="3.8" fill="#f39c12"/>
 <path d="M1782.5 1048.8H1793.5 M1782.5 1048.8V1061H1791 M1785.5 1063.5H1791 M1788 1061V1063.5" fill="none" stroke="#1a1a1a" stroke-width="1.1"/>
 <rect x="1793.2" y="1048.5" width="4" height="5.5" rx="2" fill="none" stroke="#1a1a1a" stroke-width="1"/>
 <path d="M1795.2 1054V1063.8" stroke="#1a1a1a" stroke-width="1"/>
 <path d="M1806.2 1053.5H1809L1813 1049.8V1062.2L1809 1058.5H1806.2Z" fill="none" stroke="#1a1a1a" stroke-width="1.1"/>
 <path d="M1815.2 1053.5C1816.2 1054.8 1816.2 1057.2 1815.2 1058.5 M1817.6 1051.5C1819.3 1054 1819.3 1058 1817.6 1060.5 M1820 1049.5C1822.5 1053.5 1822.5 1058.5 1820 1062.5" fill="none" stroke="#1a1a1a" stroke-width="1.1"/>
</svg>
<div class="abs" style="left:952px;top:1044.5px;width:22px;height:21.5px;border-radius:7px 6px 8px 6px;transform:skewX(14deg);background:conic-gradient(from 0deg at 55% 50%,#8a6ff0 0deg,#cf62dc 60deg,#f0648c 130deg,#f59a3b 195deg,#9fd04a 245deg,#33b7dc 290deg,#2b86ef 330deg,#8a6ff0 360deg)"></div>
<div class="abs" style="left:960px;top:1052.5px;width:6.5px;height:7.5px;border-radius:2.5px;transform:skewX(14deg);background:#f1e9da"></div>
<div class="t" style="left:712.5px;top:1049px;font-size:14px;color:#5d5d5d;transform-origin:0 0;transform:scaleX(0.93)">Buscar</div>
<div class="t" style="left:1144.6px;top:1042px;font-size:10px;color:#ffffff">B</div>
<div class="t" style="left:1742.5px;top:1044px;font-size:11px;color:#1a1a1a;transform-origin:0 0;transform:scaleX(0.88)">ESP</div>
<div class="t" style="left:1741.5px;top:1059.2px;font-size:11px;color:#1a1a1a">LAA</div>
<div class="t" style="left:1872px;top:1042.5px;font-size:11.5px;color:#1a1a1a;letter-spacing:0.2px">08:26</div>
<div class="t" style="left:1839.5px;top:1059px;font-size:11.5px;color:#1a1a1a;letter-spacing:0.55px">13/11/2025</div>

</body></html>
